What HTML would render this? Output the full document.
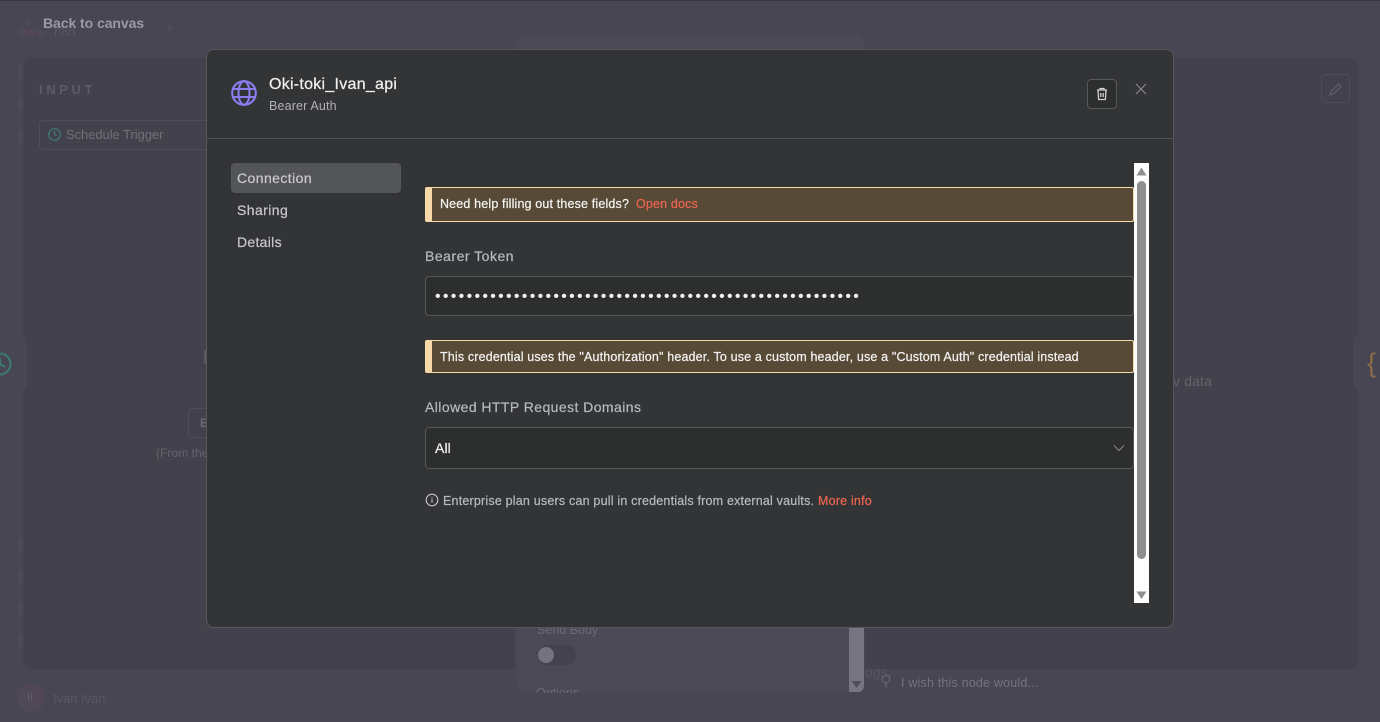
<!DOCTYPE html>
<html lang="en">
<head>
<meta charset="utf-8">
<title>Oki-toki_Ivan_api</title>
<style>
html,body{margin:0;padding:0;width:1380px;height:722px;overflow:hidden;background:#474652;}
body{position:relative;font-family:"Liberation Sans",sans-serif;}
.a{position:absolute;box-sizing:border-box;}
.t{position:absolute;white-space:nowrap;line-height:1;}
.m{-webkit-text-stroke:.22px currentColor;}
svg{position:absolute;display:block;}
</style>
</head>
<body>
<div class="a" style="left:0;top:0;width:1380px;height:1px;background:#38383b"></div>

<!-- background layer -->
<div class="a" style="left:23px;top:58px;width:1335px;height:611px;background:#43414b;border-radius:8px"></div>
<div class="a" style="left:515px;top:33px;width:350px;height:660px;background:#4a4955;border-radius:12px;border:1px solid #464550"></div>
<div class="a" style="left:849px;top:600px;width:15px;height:92px;background:#777580;border-radius:0 0 6px 0"></div>
<svg style="left:849px;top:678px" width="15" height="14"><path d="M2.500 3h10l-5 7z" fill="#4f4e59"/></svg>
<div class="a" style="left:0;top:336px;width:27px;height:54px;background:#474652;border:1px solid #4a4955;border-left:0;border-radius:0 6px 6px 0"></div>
<svg style="left:-13px;top:351px" width="26" height="26" fill="none" stroke="#3d7a77" stroke-width="2"><circle cx="13" cy="13" r="10.500"/><path d="M13 7v6l5 3"/></svg>
<div class="a" style="left:1354px;top:336px;width:26px;height:54px;background:#474652;border:1px solid #4a4955;border-right:0;border-radius:6px 0 0 6px"></div>
<div class="t" style="left:1367px;top:350px;font-size:27px;color:#8f6b4a">{</div>

<svg style="left:19px;top:26px" width="30" height="14" fill="none" stroke="#5c4a5a" stroke-width="1.200"><circle cx="4" cy="6" r="2.400"/><circle cx="13" cy="6" r="2.400"/><circle cx="22" cy="8" r="2.400"/><path d="M6.500 6h4M15.500 6h4"/></svg>
<div class="t" style="left:54px;top:25px;font-size:13px;color:#565560">n8n</div>
<div class="t" style="left:165px;top:21px;font-size:16px;color:#53525d">+</div>
<svg style="left:24px;top:16px" width="14" height="14" fill="none" stroke="#4d4c57" stroke-width="1.300"><path d="M10 7H2M6 3L2 7l4 4"/></svg>
<div class="t" style="left:43px;top:16px;font-size:14px;font-weight:700;color:#9a99a1;letter-spacing:-.06px">Back to canvas</div>

<div class="t" style="left:39px;top:83px;font-size:13px;font-weight:700;color:#5c5b66;letter-spacing:3.600px">INPUT</div>
<div class="a" style="left:39px;top:120px;width:180px;height:30px;border:1px solid #4e4d58;border-radius:4px"></div>
<svg style="left:47px;top:127px" width="15" height="15" fill="none" stroke="#3d7a77" stroke-width="1.200"><circle cx="7.500" cy="7.500" r="5.800"/><path d="M7.500 4v3.500l2.400 1.400"/></svg>
<div class="t" style="left:66px;top:128px;font-size:13px;color:#72717b;letter-spacing:-.06px">Schedule Trigger</div>
<div class="a" style="left:204px;top:350px;width:3px;height:14px;background:#5a5964"></div>
<div class="a" style="left:188px;top:408px;width:30px;height:30px;border:1px solid #4f4e59;border-radius:4px"></div>
<div class="t" style="left:200px;top:417px;font-size:12px;font-weight:700;color:#6b6a74">E</div>
<div class="t" style="left:156px;top:447px;font-size:12px;color:#65646e;letter-spacing:.05px">(From the</div>
<div class="a" style="left:1321px;top:74px;width:29px;height:29px;border:1px solid #4e4d58;border-radius:4px"></div>
<svg style="left:1328px;top:81px" width="16" height="16" fill="none" stroke="#62616c" stroke-width="1.100"><path d="M2 14l1-3.500 7.500-7.500 2.500 2.500-7.500 7.500z"/></svg>
<div class="t" style="left:1173px;top:374px;font-size:14px;color:#64636d;letter-spacing:.15px">v data</div>
<div class="t" style="left:865px;top:665px;font-size:14px;color:#575661">ogs.</div>
<svg style="left:879px;top:673px" width="14" height="18" fill="none" stroke="#6a6973" stroke-width="1"><circle cx="7" cy="6" r="3.800"/><path d="M5.500 11h3M6 13h2M6.500 15h1"/></svg>
<div class="t" style="left:901px;top:677px;font-size:12.500px;color:#74737d;letter-spacing:.19px">I wish this node would...</div>
<div class="t" style="left:537px;top:624px;font-size:12.500px;color:#6c6b75">Send Body</div>
<div class="a" style="left:537px;top:645px;width:39px;height:20px;background:#43424d;border-radius:10px"></div>
<div class="a" style="left:538px;top:647px;width:16px;height:16px;background:#75747e;border-radius:50%"></div>
<div class="a" style="left:536px;top:687px;width:70px;height:6px;overflow:hidden"><div class="t" style="left:0;top:0;font-size:12.500px;color:#6c6b75">Options</div></div>
<div class="a" style="left:17px;top:684px;width:28px;height:28px;background:#504857;border-radius:50%"></div>
<div class="t" style="left:27px;top:692px;font-size:11px;color:#625c69">II</div>
<div class="t" style="left:53px;top:692px;font-size:13px;color:#595863;letter-spacing:-.05px">Ivan Ivan</div>
<div class="t" style="left:165px;top:691px;font-size:12px;color:#4f4e59">···</div>
<div class="a" style="left:18px;top:538px;width:5px;height:13px;background:#4b4a55"></div>
<div class="a" style="left:18px;top:570px;width:5px;height:14px;background:#4b4a55"></div>
<div class="a" style="left:18px;top:603px;width:5px;height:13px;background:#4b4a55"></div>
<div class="a" style="left:18px;top:635px;width:5px;height:12px;background:#4b4a55"></div>
<div class="a" style="left:18px;top:65px;width:5px;height:14px;background:#4b4a55"></div>
<div class="a" style="left:18px;top:98px;width:5px;height:12px;background:#4b4a55"></div>
<div class="a" style="left:18px;top:130px;width:5px;height:13px;background:#4b4a55"></div>

<!-- modal -->
<div class="a" style="left:206px;top:49px;width:968px;height:579px;background:#333436;border:1px solid #56575a;border-radius:8px"></div>
<div class="a" style="left:207px;top:138px;width:966px;height:1px;background:#515255"></div>

<svg style="left:231px;top:80px" width="26" height="26" viewBox="0 0 26 26" fill="none" stroke="#8a7df0" stroke-width="2.100"><circle cx="13" cy="13" r="11.800"/><ellipse cx="13" cy="13" rx="5.500" ry="11.800"/><path d="M2.200 9h21.600M2.200 17h21.600"/></svg>
<div class="t m" style="left:269px;top:77px;font-size:16px;color:#f1f1f2;letter-spacing:.27px">Oki-toki_Ivan_api</div>
<div class="t" style="left:269px;top:100px;font-size:12.500px;color:#b1b2b8;letter-spacing:.15px">Bearer Auth</div>

<div class="a" style="left:1087px;top:79px;width:30px;height:30px;background:#2d2e2e;border:1px solid #57585b;border-radius:4px"></div>
<svg style="left:1094px;top:86px" width="16" height="16" viewBox="0 0 16 16" fill="none" stroke="#d0d0d4" stroke-width="1.300"><path d="M3 4h10M6 4V2.500h4V4M4 4l.6 9.500h6.800L12 4M6.800 7v4M9.200 7v4"/></svg>
<svg style="left:1135px;top:83px" width="12" height="12" fill="none" stroke="#8f9095" stroke-width="1"><path d="M1 1l10 10M11 1L1 11"/></svg>

<div class="a" style="left:231px;top:163px;width:170px;height:30px;background:#545557;border-radius:4px"></div>
<div class="t m" style="left:237px;top:171px;font-size:14px;color:#c8c9ce;letter-spacing:.42px">Connection</div>
<div class="t m" style="left:237px;top:203px;font-size:14px;color:#c8c9ce;letter-spacing:.42px">Sharing</div>
<div class="t m" style="left:237px;top:235px;font-size:14px;color:#c8c9ce;letter-spacing:.3px">Details</div>

<div class="a" style="left:425px;top:187px;width:709px;height:35px;background:#574a36;border:1px solid #f5d9a8;border-left:7px solid #f5d9a8;border-radius:2px"></div>
<div class="t m" style="left:440px;top:198px;font-size:12.500px;color:#f3f3f3;letter-spacing:.16px">Need help filling out these fields?</div>
<div class="t m" style="left:636px;top:198px;font-size:12.500px;color:#ee6551;letter-spacing:.16px">Open docs</div>

<div class="t m" style="left:425px;top:249px;font-size:14px;color:#b6b8c2;letter-spacing:.5px">Bearer Token</div>
<div class="a" style="left:425px;top:276px;width:709px;height:40px;background:#2d2e2e;border:1px solid #56575a;border-radius:4px"></div>
<div class="t" style="left:435px;top:289px;font-size:16px;color:#f1f1f2;letter-spacing:2.290px">••••••••••••••••••••••••••••••••••••••••••••••••••••••</div>

<div class="a" style="left:425px;top:340px;width:709px;height:33px;background:#574a36;border:1px solid #f5d9a8;border-left:7px solid #f5d9a8;border-radius:2px"></div>
<div class="t m" style="left:440px;top:351px;font-size:12.500px;color:#f3f3f3;letter-spacing:.157px">This credential uses the "Authorization" header. To use a custom header, use a "Custom Auth" credential instead</div>

<div class="t m" style="left:425px;top:400px;font-size:14px;color:#b6b8c2;letter-spacing:.43px">Allowed HTTP Request Domains</div>
<div class="a" style="left:425px;top:427px;width:709px;height:42px;background:#2d2e2e;border:1px solid #56575a;border-radius:4px"></div>
<div class="t m" style="left:435px;top:441px;font-size:14px;color:#f1f1f2;letter-spacing:.1px">All</div>
<svg style="left:1113px;top:444px" width="12" height="8" fill="none" stroke="#85868b" stroke-width="1.100"><path d="M1 1.500l5 5 5-5"/></svg>

<svg style="left:425px;top:493px" width="14" height="14" fill="none" stroke="#c4c5cb" stroke-width="1.100"><circle cx="7" cy="7" r="5.800"/><path d="M7 6.300v3.500M7 4v1.100"/></svg>
<div class="t m" style="left:443px;top:495px;font-size:12.500px;color:#b6b8c2;letter-spacing:.2px">Enterprise plan users can pull in credentials from external vaults.</div>
<div class="t m" style="left:818px;top:495px;font-size:12.500px;color:#ee6551;letter-spacing:.2px">More info</div>

<!-- scrollbar -->
<div class="a" style="left:1134px;top:163px;width:15px;height:440px;background:#fdfdfd"></div>
<svg style="left:1134px;top:163px" width="15" height="15"><path d="M2.500 12.500h10L7.500 4.500z" fill="#8f8f8f"/></svg>
<div class="a" style="left:1137px;top:181px;width:9px;height:378px;background:#8f8f8f;border-radius:5px"></div>
<svg style="left:1134px;top:588px" width="15" height="15"><path d="M2.500 3.500h10l-5 7.500z" fill="#8f8f8f"/></svg>
</body>
</html>
